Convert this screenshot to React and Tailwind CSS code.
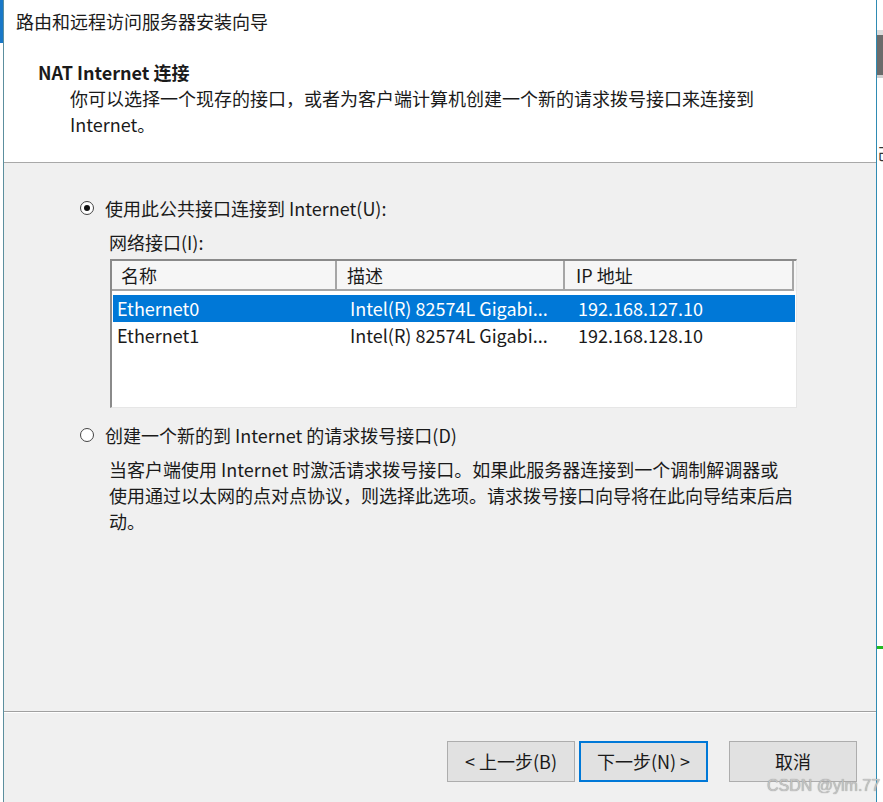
import React from "react";

function Radio({ checked }) {
  return (
    <div className="w-[14px] h-[14px] rounded-full border border-[#444] bg-white flex items-center justify-center shrink-0">
      {checked && <div className="w-[6px] h-[6px] rounded-full bg-[#111]" />}
    </div>
  );
}

function Btn({ children, primary }) {
  return (
    <div
      className={
        "h-[41px] flex items-center justify-center bg-[#e1e1e1] " +
        (primary ? "w-[129px] border-2 border-[#0078d7]" : "w-[128px] border border-[#adadad]")
      }
    >
      {children}
    </div>
  );
}

export default function App() {
  const rows = [
    ["Ethernet0", "Intel(R) 82574L Gigabi...", "192.168.127.10", true],
    ["Ethernet1", "Intel(R) 82574L Gigabi...", "192.168.128.10", false],
  ];
  return (
    <div className="relative w-[883px] h-[802px] bg-white flex overflow-hidden font-['Noto_Sans_CJK_SC',sans-serif] text-[18px] text-[#1a1a1a]">
      {/* left edge */}
      <div className="w-[3px] flex flex-col">
        <div className="h-[43px] bg-[#1a78c8]" />
      </div>
      <div className="w-px bg-[#5c8f9e]" />

      {/* dialog */}
      <div className="w-[872px] flex flex-col">
        <div className="h-[163px] bg-white border-b border-[#a8a8a8] flex flex-col">
          <div className="pl-[12px] pt-[8px] leading-[26px]">路由和远程访问服务器安装向导</div>
          <div className="pl-[34px] mt-[25px] leading-[26px] font-bold">NAT Internet 连接</div>
          <div className="pl-[66px] leading-[26px]">
            <div>你可以选择一个现存的接口，或者为客户端计算机创建一个新的请求拨号接口来连接到</div>
            <div>Internet。</div>
          </div>
        </div>

        <div className="flex-1 bg-[#f0f0f0] flex flex-col">
          <div className="pt-[32px] pl-[76px] flex items-center h-[58px] leading-[26px]">
            <Radio checked />
            <span className="ml-[11px]">使用此公共接口连接到 Internet(U):</span>
          </div>
          <div className="pl-[105px] mt-[8px] leading-[26px]">网络接口(I):</div>

          <div className="ml-[106px] mt-[4px] w-[687px] h-[149px] bg-white border-t-2 border-l-2 border-[#8a8a8a] border-r border-b border-r-[#e6e6e6] border-b-[#e6e6e6] flex flex-col">
            <div className="flex h-[30px] bg-[#f6f6f6]">
              <div className="w-[225px] border-r-2 border-b-2 border-[#a6a6a6] pl-[9px] flex items-center">名称</div>
              <div className="w-[228px] border-r-2 border-b-2 border-[#a6a6a6] pl-[10px] flex items-center">描述</div>
              <div className="w-[229px] border-r-2 border-b-2 border-[#a6a6a6] pl-[11px] flex items-center">IP 地址</div>
            </div>
            <div className="mt-[4px] flex flex-col">
              {rows.map(([a, b, c, sel]) => (
                <div
                  key={a}
                  className={
                    "flex h-[27px] items-center ml-px mr-px " +
                    (sel ? "bg-[#0078d7] text-white" : "")
                  }
                >
                  <div className="w-[225px] pl-[4px]">{a}</div>
                  <div className="w-[230px] pl-[12px]">{b}</div>
                  <div className="pl-[10px]">{c}</div>
                </div>
              ))}
            </div>
          </div>

          <div className="pl-[76px] mt-[14px] flex items-center h-[26px] leading-[26px]">
            <Radio />
            <span className="ml-[11px]">创建一个新的到 Internet 的请求拨号接口(D)</span>
          </div>
          <div className="pl-[105px] mt-[8px] leading-[26px]">
            <div>当客户端使用 Internet 时激活请求拨号接口。如果此服务器连接到一个调制解调器或</div>
            <div>使用通过以太网的点对点协议，则选择此选项。请求拨号接口向导将在此向导结束后启</div>
            <div>动。</div>
          </div>

          <div className="mt-auto h-px bg-[#a0a0a0]" />
          <div className="h-px bg-white" />
          <div className="h-[89px] flex pl-[443px] pt-[28px] items-start">
            <Btn>&lt; 上一步(B)</Btn>
            <div className="w-[4px]" />
            <Btn primary>下一步(N) &gt;</Btn>
            <div className="w-[21px]" />
            <Btn>取消</Btn>
          </div>
        </div>
      </div>

      <div className="w-px bg-[#2f8bb3]" />

      {/* neighbouring window sliver */}
      <div className="flex-1 bg-white flex flex-col overflow-hidden">
        <div className="mt-[30px] h-[5px] bg-[#dcdcdc]" />
        <div className="h-[40px] bg-[#6b6b6b]" />
        <div className="h-[3px] bg-[#d0d0d0]" />
        <div className="mt-[66px] h-[18px] leading-[18px] text-[16px] text-[#333] whitespace-nowrap">己</div>
        <div className="mt-[484px] h-[3px] bg-[#22bb22]" />
      </div>

      <div className="absolute left-[767px] top-[776px] text-[16px] leading-[20px] text-[#c4c4c4] font-['Liberation_Sans',sans-serif] whitespace-nowrap [text-shadow:0_0_1px_#888]">
        CSDN @ylm.77
      </div>
    </div>
  );
}
